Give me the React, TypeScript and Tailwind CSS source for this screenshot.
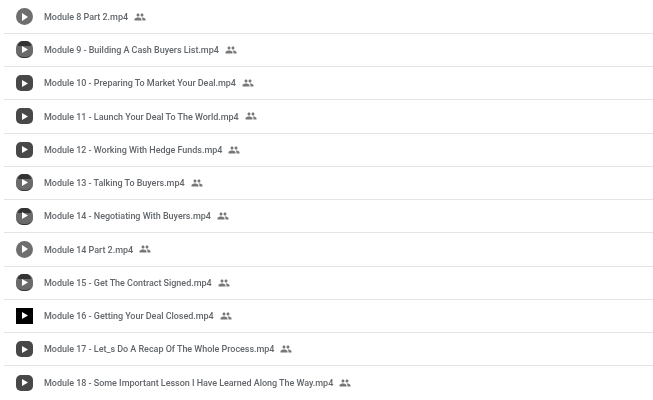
const modules = [
  { name: "Module 8 Part 2.mp4", thumb: "round" },
  { name: "Module 9 - Building A Cash Buyers List.mp4", thumb: "mixed" },
  { name: "Module 10 - Preparing To Market Your Deal.mp4", thumb: "dark" },
  { name: "Module 11 - Launch Your Deal To The World.mp4", thumb: "dark" },
  { name: "Module 12 - Working With Hedge Funds.mp4", thumb: "dark" },
  { name: "Module 13 - Talking To Buyers.mp4", thumb: "mixed" },
  { name: "Module 14 - Negotiating With Buyers.mp4", thumb: "mixed" },
  { name: "Module 14 Part 2.mp4", thumb: "round" },
  { name: "Module 15 - Get The Contract Signed.mp4", thumb: "mixed" },
  { name: "Module 16 - Getting Your Deal Closed.mp4", thumb: "black" },
  { name: "Module 17 - Let_s Do A Recap Of The Whole Process.mp4", thumb: "dark" },
  { name: "Module 18 - Some Important Lesson I Have Learned Along The Way.mp4", thumb: "dark" },
];

// Miniatura do vídeo com o botão de play
function Thumb({ kind }: { kind: string }) {
  if (kind === "black") {
    return (
      <div className="w-[17px] h-[16px] bg-black flex items-center justify-center">
        <svg width="6" height="7" viewBox="0 0 6 7">
          <path d="M0 0L6 3.5L0 7Z" fill="#fff" />
        </svg>
      </div>
    );
  }
  if (kind === "round") {
    return (
      <div className="w-[17px] h-[17px] rounded-full bg-[#6e6e6e] flex items-center justify-center">
        <svg width="6" height="8" viewBox="0 0 6 8">
          <path d="M0 0L6 4L0 8Z" fill="#fff" />
        </svg>
      </div>
    );
  }
  if (kind === "mixed") {
    return (
      <div className="relative w-[17px] h-[17px] rounded-[7px] bg-[#6a6a6a] flex items-center justify-center border-b border-[#333]">
        <div className="absolute top-0 inset-x-[2px] h-[5px] rounded-t-[6px] bg-[#333]" />
        <svg className="relative" width="6" height="7" viewBox="0 0 6 7">
          <path d="M0 0L6 3.5L0 7Z" fill="#fff" />
        </svg>
      </div>
    );
  }
  return (
    <div className="w-[17px] h-[16px] rounded-[5px] bg-[#484848] flex items-center justify-center">
      <svg width="6" height="7" viewBox="0 0 6 7">
        <path d="M0 0L6 3.5L0 7Z" fill="#fff" />
      </svg>
    </div>
  );
}

function PeopleIcon() {
  return (
    <svg width="12" height="12" viewBox="0 0 24 24" fill="#777">
      <path d="M16 11c1.66 0 2.99-1.34 2.99-3S17.66 5 16 5s-3 1.34-3 3 1.34 3 3 3zm-8 0c1.66 0 2.99-1.34 2.99-3S9.66 5 8 5 5 6.34 5 8s1.34 3 3 3zm0 2c-2.33 0-7 1.17-7 3.5V19h14v-2.5c0-2.33-4.67-3.5-7-3.5zm8 0c-.29 0-.62.02-.97.05 1.16.84 1.97 1.97 1.97 3.45V19h6v-2.5c0-2.33-4.67-3.5-7-3.5z" />
    </svg>
  );
}

export default function App() {
  return (
    <div className="w-[653px] h-[400px] overflow-hidden bg-white pl-[4px] pt-[0.5px] font-['Roboto',sans-serif]">
      {modules.map((m, i) => (
        <div
          key={m.name}
          className={
            i === modules.length - 1
              ? "h-[33.25px] flex items-center pl-[12px]"
              : "h-[33.25px] flex items-center pl-[12px] border-b border-[#e4e4e4]"
          }
        >
          <div className="w-[17px] flex justify-center blur-[0.4px]">
            <Thumb kind={m.thumb} />
          </div>
          <span className="ml-[11px] pt-[2px] text-[9px] tracking-[-0.03px] font-medium text-[#63676b] whitespace-nowrap blur-[0.25px]">
            {m.name}
          </span>
          <span className="ml-[6px] flex blur-[0.3px]">
            <PeopleIcon />
          </span>
        </div>
      ))}
    </div>
  );
}
